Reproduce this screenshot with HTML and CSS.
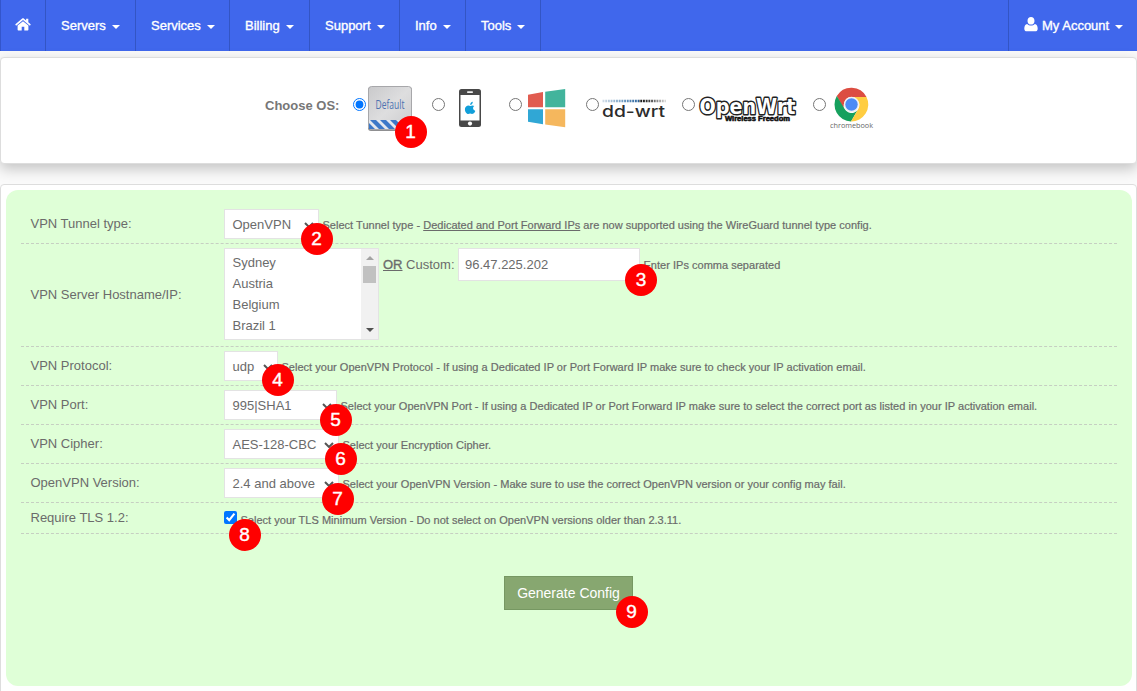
FILE: index.html
```html
<!DOCTYPE html>
<html lang="en">
<head>
<meta charset="utf-8">
<title>OpenVPN Config Generator</title>
<link rel="stylesheet" href="styles.css">
</head>
<body>
<nav class="nav">
  <a class="nav-item home"><svg width="16" height="13" viewBox="0 0 16 13"><path fill="#fff" d="M8 3.200 2.600 7.600V11.800c0 .4.300.7.700.7h3.400V8.800h2.600v3.700h3.400c.4 0 .7-.3.700-.7V7.600zM15.600 6.200 13.300 4.300V.7h-2.200v1.800L8.800.6c-.5-.4-1.100-.4-1.600 0L.4 6.200c-.2.200-.2.400 0 .6l.5.600c.2.200.4.200.6 0L8 2.100l6.500 5.300c.2.200.4.200.6 0l.5-.6c.2-.2.200-.4 0-.6"/></svg></a>
  <a class="nav-item servers">Servers<i class="caret"></i></a>
  <a class="nav-item services">Services<i class="caret"></i></a>
  <a class="nav-item billing">Billing<i class="caret"></i></a>
  <a class="nav-item support">Support<i class="caret"></i></a>
  <a class="nav-item info">Info<i class="caret"></i></a>
  <a class="nav-item tools">Tools<i class="caret"></i></a>
  <a class="nav-item account"><svg width="14" height="15" viewBox="0 0 14 15"><path fill="#fff" d="M7 0C4.900 0 3.500 1.600 3.500 3.900S5 7.600 7 7.600 10.500 6.200 10.500 3.900 9.100 0 7 0M3.200 6.900C1.200 7.200.3 9.100.3 11.700c0 1.700 1 2.600 2.500 2.600h8.400c1.500 0 2.500-.9 2.500-2.600 0-2.600-.9-4.500-2.900-4.800-2 2.200-5.600 2.200-7.600 0"/></svg><span>My Account</span><i class="caret"></i></a>
</nav>

<section class="panel os-panel">
  <span class="os-title">Choose OS:</span>
  <label class="os os-default"><input type="radio" name="os" checked>
    <span class="logo">
      <svg width="46" height="46" viewBox="0 0 46 46">
        <defs>
          <linearGradient id="metal" x1="0" y1="0" x2="1" y2="1"><stop offset="0" stop-color="#c9c9cb"/><stop offset=".5" stop-color="#dededf"/><stop offset="1" stop-color="#cbcbcd"/></linearGradient>
          <clipPath id="band"><path d="M1 34h42v9H1z"/></clipPath>
        </defs>
        <rect x="0" y="1" width="44" height="44" rx="3" fill="#8f8f91"/>
        <rect x=".5" y=".5" width="43" height="43" rx="3" fill="url(#metal)" stroke="#a7a7aa"/>
        <g clip-path="url(#band)"><path fill="#e4e8ee" d="M1 34h42v9H1z"/><path fill="#3c78c8" d="M-8 34h6l9 9H1zM2 34h6l9 9h-6zM12 34h6l9 9h-6zM22 34h6l9 9h-6zM32 34h6l9 9h-6z"/></g>
        <text class="t-default" x="7.500" y="23" textLength="29" lengthAdjust="spacingAndGlyphs">Default</text>
      </svg>
      <b class="badge b1">1</b>
    </span>
  </label>
  <label class="os os-ios"><input type="radio" name="os">
    <svg width="22" height="38" viewBox="0 0 22 38"><rect width="22" height="38" rx="2.500" fill="#484848"/><path fill="#fff" d="M1.500 6h19v25.500h-19z"/><rect x="8" y="2.300" width="6" height="1.700" rx=".8" fill="#eee"/><circle cx="11" cy="34.600" r="2.100" fill="#fff"/><path fill="#119fda" d="M11.200 15.900c-.1-1.700 1.100-3 2.600-3.200.1 1.700-1.200 3.100-2.600 3.200M15.300 17.100c-1.200-.9-2.800-.6-3.900-.1-1.200-.5-3-.8-4.300.4-1.900 1.800-1.300 5.200.7 7 1.200 1 2.200.4 3.300.2 1.100.1 2 .8 3.200 0 1-.7 1.600-1.500 2-2.700-2.600-1-2.800-3.700-1-4.800"/></svg>
  </label>
  <label class="os os-windows"><input type="radio" name="os">
    <svg width="38" height="39" viewBox="0 0 38 39"><path fill="#e15c50" d="M0 5.700 15 3v15.200H0z"/><path fill="#42b49c" d="M17.200 2.700 37.200 0v18.200h-20z"/><path fill="#30a7d5" d="M0 20.300h15v14.900L0 32.700z"/><path fill="#f5b75d" d="M17.200 20.300h20V38.200l-20-2.700z"/></svg>
  </label>
  <label class="os os-ddwrt"><input type="radio" name="os">
    <svg width="68" height="24" viewBox="0 0 68 24">
      <defs><linearGradient id="fade" gradientUnits="userSpaceOnUse" x1="0" y1="0" x2="64" y2="0"><stop offset="0" stop-color="#d5dfe8"/><stop offset=".3" stop-color="#7ba3c6"/><stop offset=".57" stop-color="#2e669e"/><stop offset=".58" stop-color="#111"/><stop offset=".75" stop-color="#444"/><stop offset="1" stop-color="#ddd"/></linearGradient></defs>
      <path d="M.5 3H64" stroke="url(#fade)" stroke-width="2.500" stroke-dasharray="1.900 .8" fill="none"/>
      <text class="t-ddwrt" x="0" y="18.700" textLength="63" lengthAdjust="spacingAndGlyphs">dd-wrt</text>
    </svg>
  </label>
  <label class="os os-openwrt"><input type="radio" name="os">
    <svg width="102" height="32" viewBox="0 0 102 32"><text class="t-openwrt" x="1.500" y="18" textLength="96" lengthAdjust="spacingAndGlyphs">OpenWrt</text><text class="t-wireless" x="27" y="24.500" textLength="65" lengthAdjust="spacingAndGlyphs">Wireless Freedom</text></svg>
  </label>
  <label class="os os-chrome"><input type="radio" name="os">
    <svg width="46" height="46" viewBox="0 0 46 46">
      <path fill="#dc4d41" d="M6.800 9A17 17 0 0 1 36.500 10H21.500a8 8 0 0 0-7.300 5.500l-1 6z"/>
      <path fill="#16a05d" d="M6.800 9A17 17 0 0 0 21 34.500l6.500-11.200a8 8 0 0 1-13 -1.500z"/>
      <path fill="#ffcd41" d="M36.500 10A17 17 0 0 1 21 34.500l7.500-13a8 8 0 0 0-3-10.500l-3-1z"/>
      <circle cx="21.500" cy="17.500" r="7.700" fill="#f1f1f1"/><circle cx="21.500" cy="17.500" r="6.200" fill="#4c8bf5"/>
      <text class="t-chrome" x="0" y="41" textLength="43" lengthAdjust="spacingAndGlyphs">chromebook</text>
    </svg>
  </label>
</section>

<section class="panel form-panel">
  <form class="form">
    <div class="row">
      <span class="label">VPN Tunnel type:</span>
      <span class="select s-tunnel">OpenVPN<svg class="chev" width="10" height="6" viewBox="0 0 10 6"><path d="M1 1l4 4 4-4"/></svg><b class="badge b2">2</b></span>
      <span class="hint h-tunnel">Select Tunnel type - <u>Dedicated and Port Forward IPs</u> are now supported using the WireGuard tunnel type config.</span>
    </div>
    <div class="row row-host">
      <span class="label">VPN Server Hostname/IP:</span>
      <div class="list">
        <div class="options"><span>Sydney</span><span>Austria</span><span>Belgium</span><span>Brazil 1</span></div>
        <div class="scroll"><i class="up"></i><i class="thumb"></i><i class="down"></i></div>
      </div>
      <span class="or"><u>OR</u> Custom:</span>
      <span class="ip">96.47.225.202<b class="badge b3">3</b></span>
      <span class="hint h-ip">Enter IPs comma separated</span>
    </div>
    <div class="row">
      <span class="label">VPN Protocol:</span>
      <span class="select s-proto">udp<svg class="chev" width="10" height="6" viewBox="0 0 10 6"><path d="M1 1l4 4 4-4"/></svg><b class="badge b4">4</b></span>
      <span class="hint">Select your OpenVPN Protocol - If using a Dedicated IP or Port Forward IP make sure to check your IP activation email.</span>
    </div>
    <div class="row">
      <span class="label">VPN Port:</span>
      <span class="select s-port">995|SHA1<svg class="chev" width="10" height="6" viewBox="0 0 10 6"><path d="M1 1l4 4 4-4"/></svg><b class="badge b5">5</b></span>
      <span class="hint">Select your OpenVPN Port - If using a Dedicated IP or Port Forward IP make sure to select the correct port as listed in your IP activation email.</span>
    </div>
    <div class="row">
      <span class="label">VPN Cipher:</span>
      <span class="select s-cipher">AES-128-CBC<svg class="chev" width="10" height="6" viewBox="0 0 10 6"><path d="M1 1l4 4 4-4"/></svg><b class="badge b6">6</b></span>
      <span class="hint">Select your Encryption Cipher.</span>
    </div>
    <div class="row">
      <span class="label">OpenVPN Version:</span>
      <span class="select s-version">2.4 and above<svg class="chev" width="10" height="6" viewBox="0 0 10 6"><path d="M1 1l4 4 4-4"/></svg><b class="badge b7">7</b></span>
      <span class="hint">Select your OpenVPN Version - Make sure to use the correct OpenVPN version or your config may fail.</span>
    </div>
    <div class="row row-tls">
      <span class="label">Require TLS 1.2:</span>
      <span class="tls"><input type="checkbox" checked><b class="badge b8">8</b></span>
      <span class="hint">Select your TLS Minimum Version - Do not select on OpenVPN versions older than 2.3.11.</span>
    </div>
    <div class="actions"><button type="button" class="generate">Generate Config<b class="badge b9">9</b></button></div>
  </form>
</section>
</body>
</html>
```
FILE: styles.css
```css
* { box-sizing: border-box; }
body { margin: 0; height: 691px; overflow: hidden; background: #fafafa; color: #6b6b6b; font: 13px/20px "Liberation Sans", Arial, sans-serif; }
svg { display: block; flex: none; }

.nav { display: flex; height: 51px; background: #4067ec; border-left: 1px solid #3355cb; color: #fff; }
.nav-item { display: flex; align-items: center; padding-left: 15px; border-right: 1px solid #3355c4; white-space: nowrap; -webkit-text-stroke: .35px #fff; }
.nav-item svg { margin-top: -2px; }
.home { width: 45px; padding-left: 14px; }
.servers { width: 90px; }
.services { width: 94px; }
.billing { width: 80px; }
.support { width: 90px; }
.info { width: 66px; }
.tools { width: 75px; }
.account { width: 129px; margin-left: auto; border-right: 0; border-left: 1px solid #3355c4; }
.account span { margin-left: 4px; }
.caret { margin: 3px 0 0 6px; border: 4px solid transparent; border-top-color: #fff; border-bottom: 0; }

.panel { background: #fff; border: 1px solid #ddd; border-radius: 4px; }
.os-panel { display: flex; height: 107px; margin-top: 6px; padding: 28px 0 0 264px; box-shadow: 0 5px 14px rgba(0, 0, 0, .22); }
.os-title { width: 88px; padding-top: 10px; font-weight: bold; color: #777; white-space: nowrap; }
.os { display: flex; }
.os input { flex: none; width: 13px; height: 13px; margin: 12px 0 0; }
.os-default { width: 79px; }
.os-default .logo { position: relative; height: 46px; margin-left: 2px; }
.os-ios { width: 77px; }
.os-ios svg { margin: 3px 0 0 14px; }
.os-windows { width: 77px; }
.os-windows svg { margin: 3px 0 0 6px; }
.os-ddwrt { width: 96px; }
.os-ddwrt svg { margin: 12px 0 0 3px; }
.os-openwrt { width: 131px; }
.os-openwrt svg { margin: 10px 0 0 3px; }
.os-chrome svg { margin: 1px 0 0 4px; }
.t-default { font: 12.5px "Open Sans", sans-serif; fill: #4e73b0; }
.t-ddwrt { font: 500 16px Inter, sans-serif; fill: #2c2c2c; }
.t-openwrt { font: bold 22px "DejaVu Sans", sans-serif; fill: #fff; stroke: #222; stroke-width: 3px; stroke-linejoin: round; paint-order: stroke; }
.t-wireless { font: bold 6.5px "Liberation Sans", sans-serif; fill: #111; stroke: #111; stroke-width: .5px; }
.t-chrome { font: 8px "Open Sans", sans-serif; fill: #666; }

.form-panel { height: 520px; margin-top: 20px; padding: 5px 4px 5px 5px; }
.form { height: 496px; padding: 15px; border-radius: 12px; background: #dfffd7; }
.row { display: flex; height: 39px; padding: 4px 0 0 9.5px; border-bottom: 1px dashed #c6cfc2; white-space: nowrap; }
.row-host { height: 103px; }
.row-tls { height: 31px; }
.label { width: 193.5px; padding-top: 5px; }
.row-host .label { padding-top: 37px; }
.row-tls .label { padding-top: 1px; }
.select { position: relative; display: flex; align-items: center; height: 30px; padding: 1px 0 0 7.5px; border: 1px solid #e3e3e3; background: #fff; }
.chev { position: absolute; right: 4px; top: 12px; fill: none; stroke: #555; stroke-width: 2px; }
.s-tunnel { width: 95px; }
.s-proto { width: 54px; }
.s-port { width: 113px; }
.s-cipher { width: 115px; }
.s-version { width: 115px; }
.hint { margin-left: 3.5px; padding-top: 6px; font-size: 11px; letter-spacing: .019px; -webkit-text-stroke: .2px #6b6b6b; }
.row-tls .hint { padding-top: 3px; }
.list { display: flex; width: 155px; height: 92px; border: 1px solid #e3e3e3; background: #fff; }
.options { flex: 1; padding: 3px 0 0 7.5px; }
.options span { display: block; height: 21px; line-height: 21px; }
.scroll { display: flex; flex-direction: column; align-items: center; width: 17px; background: #f1f1f1; }
.up, .down { border: 4px solid transparent; }
.up { margin-top: 7px; border-top: 0; border-bottom-color: #a3a3a3; }
.thumb { width: 13px; height: 17px; margin-top: 6px; background: #c1c1c1; }
.down { margin: auto 0 7px; border-bottom: 0; border-top-color: #505050; }
.or { width: 75px; margin-left: 4px; padding-top: 7px; }
.or u { -webkit-text-stroke: .35px #6b6b6b; }
.ip { position: relative; width: 182px; height: 33px; padding-left: 6px; border: 1px solid #e3e3e3; background: #fff; line-height: 31px; }
.h-ip { padding-top: 7px; }
.tls { position: relative; }
.tls input { display: block; width: 13px; height: 13px; margin: 4px 0 0; }
.actions { display: flex; padding: 42px 0 0 483px; }
.generate { position: relative; width: 129px; height: 34px; padding: 0; border: 1px solid #769862; background: #87a770; color: #fff; font: 14px "Liberation Sans", Arial, sans-serif; }

.badge { position: absolute; z-index: 2; width: 32px; height: 32px; border-radius: 50%; background: #f00; color: #fff; font: 19px/31px "Liberation Sans", Arial, sans-serif; text-align: center; -webkit-text-stroke: .4px #fff; }
.b1 { left: 26.5px; top: 29.5px; }
.b2 { left: 75.5px; top: 12.5px; }
.b3 { left: 166px; top: 14.5px; }
.b4 { left: 36.5px; top: 11.5px; }
.b5 { left: 94.5px; top: 12.5px; }
.b6 { left: 99.5px; top: 12.5px; }
.b7 { left: 96.5px; top: 13.5px; }
.b8 { left: 4.5px; top: 11.5px; }
.b9 { left: 110.5px; top: 18.5px; }
```
